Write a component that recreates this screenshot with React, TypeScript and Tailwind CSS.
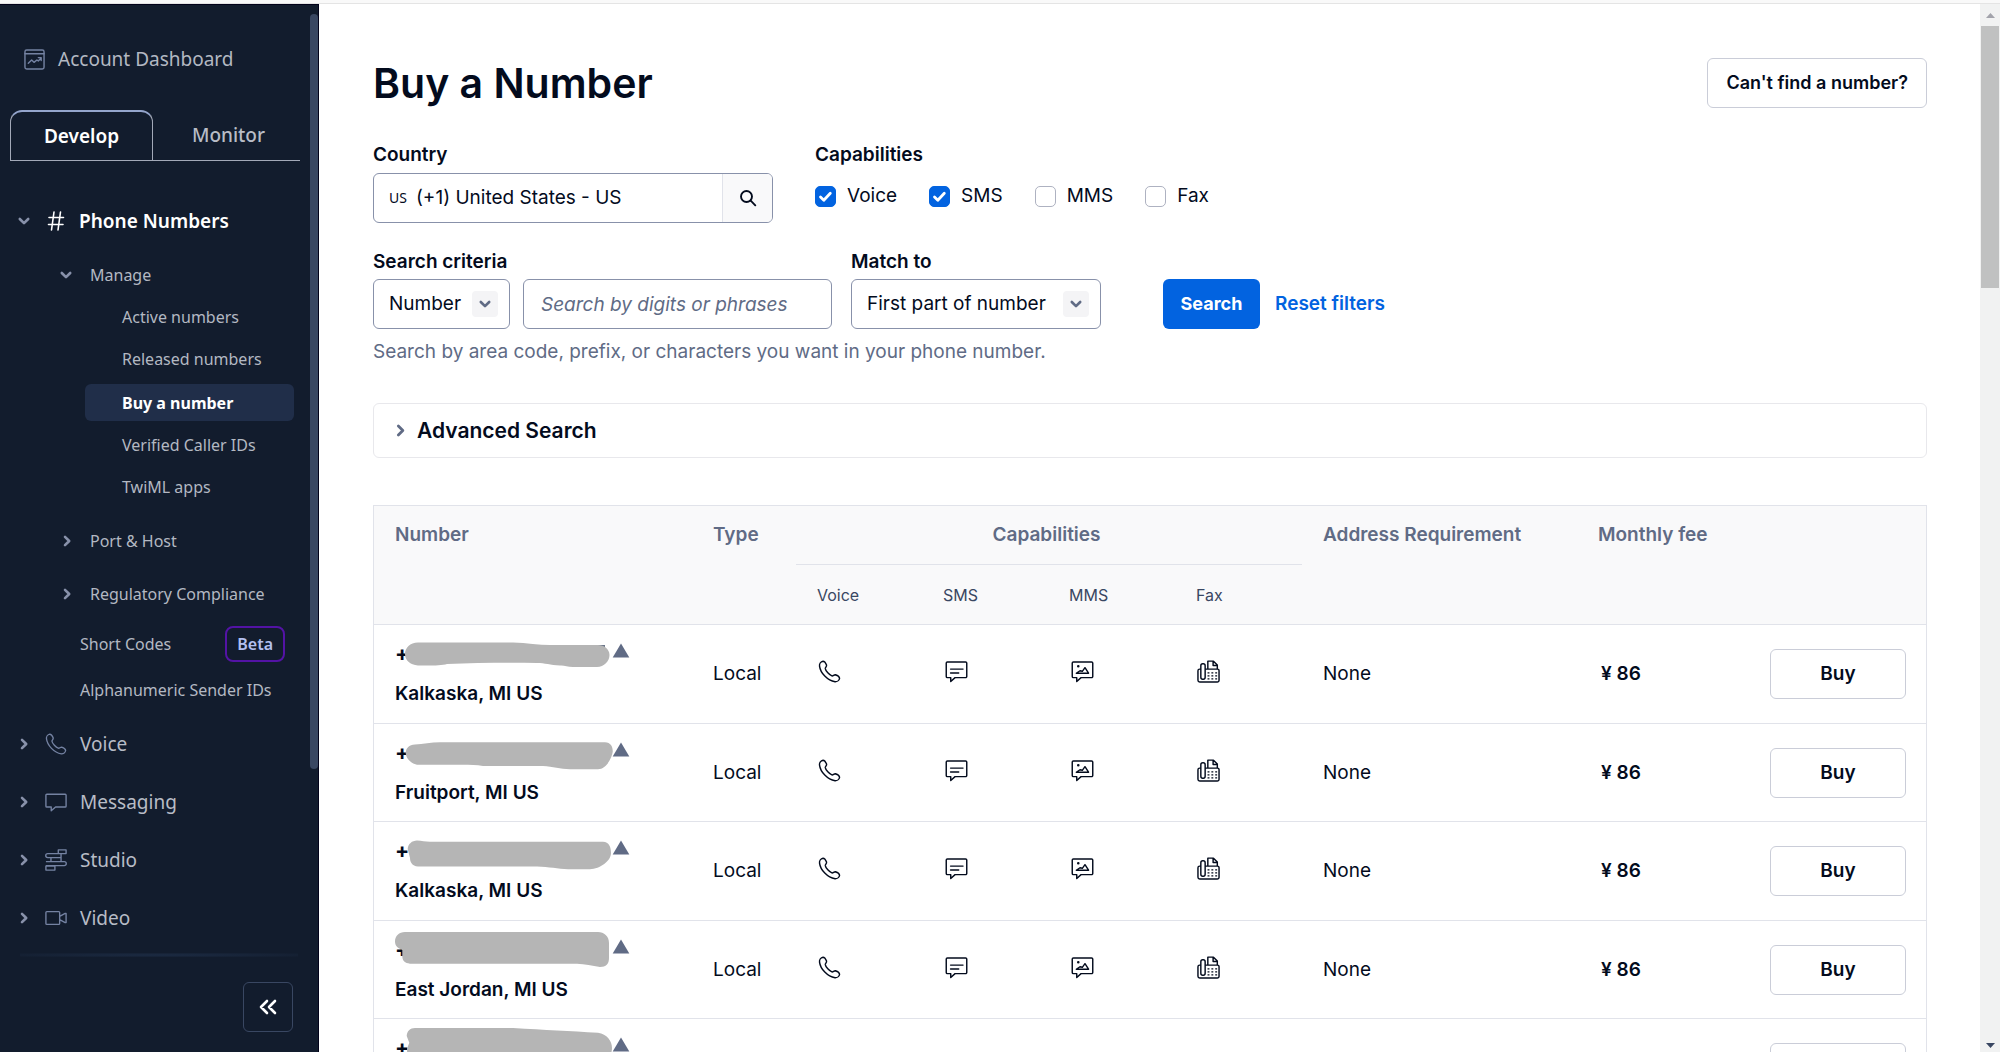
import type { ReactNode } from "react";

type IconProps = { className?: string };

function ChevronDown({ className }: IconProps) {
  return (
    <svg viewBox="0 0 14 14" className={className} fill="none" stroke="currentColor" strokeWidth="2.6" strokeLinecap="round" strokeLinejoin="round" aria-hidden="true">
      <path d="M2.8 5l4.2 4.2L11.2 5" />
    </svg>
  );
}

function ChevronRight({ className }: IconProps) {
  return (
    <svg viewBox="0 0 14 14" className={className} fill="none" stroke="currentColor" strokeWidth="2.6" strokeLinecap="round" strokeLinejoin="round" aria-hidden="true">
      <path d="M5 2.8L9.2 7 5 11.2" />
    </svg>
  );
}

function PhoneIcon({ className }: IconProps) {
  return (
    <svg viewBox="0 0 24 24" className={className} fill="none" stroke="currentColor" strokeWidth="1.5" strokeLinejoin="round" aria-hidden="true">
      <path d="M1.600 6.300C1.300 4 3 1.700 5.200 1.300c1.600-.1 2.800 1.800 3.700 4 .5 1.600-1.400 2.400-1.300 3.700.4 2.500 4.300 6.600 6.900 7.600 1.300.4 2.200-1.400 3.700-1.200 1.900.6 4.200 2.200 4.300 3.700-.3 2-2.500 3.700-4.700 3.600C9.900 21.500 2.500 13.500 1.600 6.300z" />
    </svg>
  );
}

function MessageIcon({ className }: IconProps) {
  return (
    <svg viewBox="0 0 24 24" className={className} fill="none" stroke="currentColor" strokeWidth="1.5" strokeLinejoin="round" aria-hidden="true">
      <path d="M2 3.500h20a1 1 0 0 1 1 1v12a1 1 0 0 1-1 1H11.500L6.800 21.500V17.500H2a1 1 0 0 1-1-1v-12a1 1 0 0 1 1-1z" />
    </svg>
  );
}

function StudioIcon({ className }: IconProps) {
  return (
    <svg viewBox="0 0 24 24" className={className} fill="none" stroke="currentColor" strokeWidth="1.5" strokeLinejoin="round" aria-hidden="true">
      <path d="M14.500 1h8.500v4h-8.500zM14.500 5H3a2.200 2.200 0 0 0 0 4.400h14.500V5M6.500 9.400h11v4.400h-11zM6.500 13.800H1M6.500 13.800H21a2.200 2.200 0 0 1 0 4.400H1M1 18.600h9.800V23H1z" />
    </svg>
  );
}

function VideoIcon({ className }: IconProps) {
  return (
    <svg viewBox="0 0 24 24" className={className} fill="none" stroke="currentColor" strokeWidth="1.5" strokeLinejoin="round" aria-hidden="true">
      <path d="M2 5h13a1 1 0 0 1 1 1v12a1 1 0 0 1-1 1H2a1 1 0 0 1-1-1V6a1 1 0 0 1 1-1zM16 10.300l6-3.300h1v10h-1l-6-3.300" />
    </svg>
  );
}

function DashboardIcon({ className }: IconProps) {
  return (
    <svg viewBox="0 0 22 22" className={className} fill="none" stroke="currentColor" strokeWidth="1.5" strokeLinejoin="round" strokeLinecap="round" aria-hidden="true">
      <rect x="1" y="1" width="20" height="20" rx="1.800" />
      <path d="M1 5h20M4.500 15l3.500-3.500 2.500 2.500 3-2.500 1.500 1 3-3M15 9h3v3" />
    </svg>
  );
}

function SmsIcon({ className }: IconProps) {
  return (
    <svg viewBox="0 0 24 24" className={className} fill="none" stroke="currentColor" strokeWidth="1.5" strokeLinejoin="round" strokeLinecap="round" aria-hidden="true">
      <path d="M2.500 2h19A1.200 1.200 0 0 1 22.700 3.200v14A1.200 1.200 0 0 1 21.500 18.400H10.500L6 22.500v-4.100H2.500a1.200 1.200 0 0 1-1.200-1.200v-14A1.200 1.200 0 0 1 2.500 2zM5.800 9.500h13M5.800 13.500h8.500" />
    </svg>
  );
}

function MmsIcon({ className }: IconProps) {
  return (
    <svg viewBox="0 0 24 24" className={className} fill="none" stroke="currentColor" strokeWidth="1.5" strokeLinejoin="round" strokeLinecap="round" aria-hidden="true">
      <path d="M2.500 2h19A1.200 1.200 0 0 1 22.700 3.200v14A1.200 1.200 0 0 1 21.500 18.400H10.500L6 22.500v-4.100H2.500a1.200 1.200 0 0 1-1.200-1.200v-14A1.200 1.200 0 0 1 2.500 2z" />
      <path d="M5.500 13.800h12.800L14.600 8l-2.800 3.800-2.400-.6z" />
      <circle cx="7.600" cy="6.600" r="0.600" fill="currentColor" />
    </svg>
  );
}

function FaxIcon({ className }: IconProps) {
  return (
    <svg viewBox="0 0 24 24" className={className} fill="none" stroke="currentColor" strokeWidth="1.5" strokeLinejoin="round" aria-hidden="true">
      <path d="M4 9.500H2.800A1.800 1.800 0 0 0 1 11.300v9.900A1.800 1.800 0 0 0 2.800 23h18.400a1.800 1.800 0 0 0 1.800-1.800V11.300a1.800 1.800 0 0 0-1.800-1.800H8.500" />
      <rect x="4" y="4" width="4.500" height="16" rx="2" />
      <path d="M11.300 9.500V1.200h5.900l4 4v4.300M16.800 1.500v4.200h4.200" />
      <path d="M11 13.400h10M11 16.600h10M11 19.800h10" strokeWidth="1.300" strokeDasharray="2 2" />
    </svg>
  );
}

function HashIcon({ className }: IconProps) {
  return (
    <svg viewBox="0 0 18 22" className={className} fill="none" stroke="currentColor" strokeWidth="1.600" strokeLinecap="round" aria-hidden="true">
      <path d="M7 2L4.500 20M13.500 2L11 20M2 7.500h14.500M1.500 14.500H16" />
    </svg>
  );
}

function TopLink({ label, icon }: { label: string; icon: ReactNode }) {
  return (
    <a href="#" className="flex h-[58px] items-center text-[19px] text-[#b8bcc6]">
      <ChevronRight className="ml-[17px] size-[14px] text-[#8891aa]" />
      <span className="ml-[14px] mr-[13px] text-[#7482a2]">{icon}</span>
      {label}
    </a>
  );
}

function SubLink({ label, active }: { label: string; active?: boolean }) {
  return (
    <li>
      <a
        href="#"
        aria-current={active ? "page" : undefined}
        className={
          active
            ? "mt-1 mr-[24px] mb-[3px] ml-[85px] flex h-[37px] items-center rounded-md bg-[#202e49] pl-[37px] font-bold text-white"
            : "flex h-[42px] items-center pl-[122px]"
        }
      >
        {label}
      </a>
    </li>
  );
}

function Sidebar() {
  return (
    <aside className="relative flex w-[319px] shrink-0 flex-col border-t border-r border-[#02021a] bg-[#121c2d] font-['Noto_Sans',sans-serif] text-[16px] text-[#b3b8c2]">
      <div aria-hidden="true" className="absolute top-[9px] right-0 h-[755px] w-2 rounded-full bg-[#394762]" />
      <a href="#" className="mt-[25px] flex h-[58px] items-center gap-[13px] pl-[24px] text-[19px]">
        <DashboardIcon className="size-[21px] text-[#7482a2]" />
        Account Dashboard
      </a>
      <div role="tablist" className="mt-[22px] mr-[18px] ml-[10px] flex h-[51px] text-[19px] font-medium">
        <button type="button" role="tab" aria-selected="true" className="w-[143px] rounded-t-xl border border-t-2 border-[#a3a9b8] border-t-[#94a5cc] font-semibold text-white">
          Develop
        </button>
        <button type="button" role="tab" aria-selected="false" className="flex-1 border-b border-[#a3a9b8] pl-1 text-[#b8bcc6]">
          Monitor
        </button>
      </div>
      <nav className="flex-1 pt-[32px]">
        <a href="#" className="flex h-[56px] items-center text-[19px] font-semibold text-white">
          <ChevronDown className="ml-[17px] size-[14px] text-[#8891aa]" />
          <HashIcon className="mr-[14px] ml-[16px] h-[22px] w-[18px]" />
          Phone Numbers
        </a>
        <a href="#" className="mt-[5px] flex h-[42px] items-center">
          <ChevronDown className="ml-[59px] mr-[17px] size-[14px] text-[#8891aa]" />
          Manage
        </a>
        <ul>
          <SubLink label="Active numbers" />
          <SubLink label="Released numbers" />
          <SubLink label="Buy a number" active />
          <SubLink label="Verified Caller IDs" />
          <SubLink label="TwiML apps" />
        </ul>
        <a href="#" className="mt-[6px] flex h-[53px] items-center">
          <ChevronRight className="ml-[60px] mr-[16px] size-[14px] text-[#8891aa]" />
          Port &amp; Host
        </a>
        <a href="#" className="flex h-[53px] items-center">
          <ChevronRight className="ml-[60px] mr-[16px] size-[14px] text-[#8891aa]" />
          Regulatory Compliance
        </a>
        <a href="#" className="flex h-[48px] items-center justify-between pr-[33px] pl-[80px]">
          Short Codes
          <span className="rounded-lg border-2 border-[#5313a5] px-[10px] py-[4px] font-semibold text-[#b3c0f0]">Beta</span>
        </a>
        <a href="#" className="mb-[3px] flex h-[44px] items-center pl-[80px]">Alphanumeric Sender IDs</a>
        <TopLink label="Voice" icon={<PhoneIcon className="size-[22px]" />} />
        <TopLink label="Messaging" icon={<MessageIcon className="size-[22px]" />} />
        <TopLink label="Studio" icon={<StudioIcon className="size-[22px]" />} />
        <TopLink label="Video" icon={<VideoIcon className="size-[22px]" />} />
      </nav>
      <div className="mx-5 h-[4px] bg-radial from-[#1c2b43] to-transparent" />
      <div className="flex pt-[25px] pr-[25px] pb-[20px]">
        <button type="button" aria-label="Collapse sidebar" className="ml-auto grid size-[50px] place-items-center rounded-md border border-[#394762] text-white">
          <svg viewBox="0 0 18 16" className="h-4 w-[18px]" fill="none" stroke="currentColor" strokeWidth="2.600" strokeLinecap="round" strokeLinejoin="round" aria-hidden="true">
            <path d="M8 2L2 8l6 6M16 2l-6 6 6 6" />
          </svg>
        </button>
      </div>
    </aside>
  );
}

function SelectField({ id, value, className }: { id: string; value: string; className: string }) {
  return (
    <div className={className}>
      <select id={id} defaultValue={value} className="h-[50px] w-full appearance-none rounded-md border border-[#8891aa] bg-white pl-[15px]">
        <option>{value}</option>
      </select>
      <span className="pointer-events-none absolute top-3 right-3 grid size-[26px] place-items-center rounded bg-[#f4f4f6] text-[#606b85]">
        <ChevronDown className="size-[14px]" />
      </span>
    </div>
  );
}

function CapabilityBox({ label, checked }: { label: string; checked?: boolean }) {
  return (
    <label className="flex items-center gap-[11px]">
      <span className="relative grid size-[21px]">
        <input
          type="checkbox"
          defaultChecked={checked}
          className="peer size-[21px] appearance-none rounded-[5px] border border-[#aeb2c1] bg-white checked:border-[#0263e0] checked:bg-[#0263e0]"
        />
        <svg viewBox="0 0 21 21" className="pointer-events-none absolute inset-0 hidden peer-checked:block" fill="none" stroke="white" strokeWidth="2.800" strokeLinecap="round" strokeLinejoin="round" aria-hidden="true">
          <path d="M5.500 11l3.300 3.200 6.500-7" />
        </svg>
      </span>
      {label}
    </label>
  );
}

type Row = { city: string; blob: string; stray?: string };

const rows: Row[] = [
  {
    city: "Kalkaska, MI US",
    blob: "M10 20C10 14 15 8.500 23 8.500H118C132 9 144 11 155 11H203C209 11 214.500 15 214.500 21S209 33 202 33H178C172 33 169 31 165 31.500C155 31 150 29 142 29C110 28.500 80 29 52 30C46 32 30 31.500 23 31.500C15 31 10 26 10 20z",
    stray: "M199 12h11",
  },
  {
    city: "Fruitport, MI US",
    blob: "M10.700 20C11 15 14 11.700 20 11.500C28 11.500 36 9.300 45 9.300H210C216 9.500 218 14 217.700 19C217 24 212 36 203 36.300H175C165 36 158 33.700 148 33H88C80 31.500 72 31.700 60 31.700H22C17 31 11 26 10.700 20z",
  },
  {
    city: "Kalkaska, MI US",
    blob: "M12.700 18C13 13 17 9.500 22 9.500C27 9.500 30 10.800 35 10.800H208C214 11 216 16 216 22C216 30 205 38 195 38.200H173C163 38 154 35.700 142 35.500H23C17 35 15 31 15 27z",
  },
  {
    city: "East Jordan, MI US",
    blob: "M0 11.400C0 6 4 2 10 2H203C209 2 214 6 214 13V28C214 34 211 37 205 37C197 36 190 33.700 182 33.700H15C10 33 7.300 31 7.300 26V20C3 18 0 16 0 11.400z",
  },
  {
    city: "Kalkaska, MI US",
    blob: "M11.700 8C12 3 15 0 20 0H118C150 2 175 3 203 4.800C212 6 217 13 217 20C217 30 208 36 200 36H24C16 35 11 30 12.300 20L14.300 14.800z",
  },
];

const headText = "font-semibold text-[#606b85]";
const borderCell = "border-b border-[#e1e3ea]";

function NumbersTable() {
  return (
    <table className="mt-[47px] w-full table-fixed border-separate border-spacing-0 border border-[#e1e3ea] text-left">
      <colgroup>
        <col className="w-[318px]" />
        <col className="w-[104px]" />
        <col className="w-[126px]" />
        <col className="w-[126px]" />
        <col className="w-[127px]" />
        <col className="w-[127px]" />
        <col className="w-[275px]" />
        <col className="w-[169px]" />
        <col className="w-[180px]" />
      </colgroup>
      <thead className="bg-[#f9f9fa]">
        <tr className="h-[59px]">
          <th scope="col" rowSpan={2} className={`${headText} ${borderCell} pt-[17px] pl-[21px] align-top`}>Number</th>
          <th scope="col" rowSpan={2} className={`${headText} ${borderCell} pt-[17px] pl-[21px] align-top`}>Type</th>
          <th scope="colgroup" colSpan={4} className={`${headText} ${borderCell} pr-[5px] text-center`}>Capabilities</th>
          <th scope="col" rowSpan={2} className={`${headText} ${borderCell} pt-[17px] pl-[21px] align-top`}>Address Requirement</th>
          <th scope="col" rowSpan={2} className={`${headText} ${borderCell} pt-[17px] pl-[21px] align-top`}>Monthly fee</th>
          <td rowSpan={2} className={borderCell} />
        </tr>
        <tr className="h-[60px] text-[16px]">
          {["Voice", "SMS", "MMS", "Fax"].map((name) => (
            <th key={name} scope="col" className={`${borderCell} pl-[21px] font-normal text-[#394762]`}>{name}</th>
          ))}
        </tr>
      </thead>
      <tbody>
        {rows.map((row, i) => (
          <tr key={i} className="h-[99px] even:h-[98px]">
            <td className={`${borderCell} pl-[21px] font-semibold`}>
              <div className="relative flex h-10 items-center text-[21px] font-bold">
                +
                <svg viewBox="0 0 240 40" className="absolute top-0 left-0 h-10 w-[240px]" aria-hidden="true">
                  {row.stray && <path d={row.stray} stroke="#394762" strokeWidth="1.500" />}
                  <path d={row.blob} fill="#b5b5b5" />
                  <path d="M226 9.500l8.300 14h-16.600z" fill="#606b85" />
                </svg>
              </div>
              <div className="flex h-10 items-center">{row.city}</div>
            </td>
            <td className={`${borderCell} pl-[21px]`}>Local</td>
            <td className={`${borderCell} pb-[5px] pl-[22px]`}><PhoneIcon className="size-[23px]" /></td>
            <td className={`${borderCell} pb-[5px] pl-[23px]`}><SmsIcon className="size-[23px]" /></td>
            <td className={`${borderCell} pb-[5px] pl-[23px]`}><MmsIcon className="size-[23px]" /></td>
            <td className={`${borderCell} pb-[5px] pl-[22px]`}><FaxIcon className="size-[23px]" /></td>
            <td className={`${borderCell} pl-[21px]`}>None</td>
            <td className={`${borderCell} pl-[24px] font-semibold`}>¥ 86</td>
            <td className={`${borderCell} px-[20px]`}>
              <button type="button" className="ml-auto block h-[50px] w-[136px] rounded-md border border-[#cacdd8] font-semibold">Buy</button>
            </td>
          </tr>
        ))}
      </tbody>
    </table>
  );
}

export default function App() {
  return (
    <div className="flex h-screen flex-col overflow-hidden bg-white font-[Inter,sans-serif] text-[19px] leading-[24px] text-[#030b1d]">
      <div className="h-1 shrink-0 border-b border-[#e4e4e4] bg-[#f9f9f9]" />
      <div className="flex min-h-0 flex-1">
        <Sidebar />
        <main className="min-w-0 flex-1 overflow-hidden pt-[54px] pr-[53px] pl-[54px]">
          <div className="flex items-center justify-between">
            <h1 className="text-[41px] leading-[50px] font-semibold">Buy a Number</h1>
            <button type="button" className="h-[50px] rounded-md border border-[#cacdd8] px-[18px] text-[18px] font-semibold">Can't find a number?</button>
          </div>

          <div className="mt-[35px] flex gap-[42px]">
            <div>
              <label htmlFor="country" className="block font-semibold">Country</label>
              <div className="mt-[6px] flex h-[50px] w-[400px] items-center overflow-hidden rounded-md border border-[#8891aa]">
                <span className="pl-[15px] font-['Noto_Sans',sans-serif] text-[14px]">US</span>
                <input id="country" defaultValue="(+1) United States - US" className="ml-[9px] min-w-0 flex-1" />
                <button type="button" aria-label="Search countries" className="grid h-full w-[50px] place-items-center border-l border-[#e1e3ea] bg-[#f9f9fa]">
                  <svg viewBox="0 0 18 18" className="size-[18px]" fill="none" stroke="currentColor" strokeWidth="1.900" strokeLinecap="round" aria-hidden="true">
                    <circle cx="7.500" cy="7.500" r="5.500" />
                    <path d="M11.700 11.700L16.300 16.300" />
                  </svg>
                </button>
              </div>
            </div>
            <fieldset>
              <legend className="font-semibold">Capabilities</legend>
              <div className="mt-[17px] flex gap-[32px]">
                <CapabilityBox label="Voice" checked />
                <CapabilityBox label="SMS" checked />
                <CapabilityBox label="MMS" />
                <CapabilityBox label="Fax" />
              </div>
            </fieldset>
          </div>

          <div className="mt-[27px] flex items-end">
            <div>
              <label htmlFor="criteria" className="block font-semibold">Search criteria</label>
              <div className="mt-[5px] flex gap-[13px]">
                <SelectField id="criteria" value="Number" className="relative w-[137px]" />
                <input
                  aria-label="Search by digits or phrases"
                  placeholder="Search by digits or phrases"
                  className="h-[50px] w-[309px] rounded-md border border-[#8891aa] px-[17px] placeholder:text-[#606b85] placeholder:italic"
                />
              </div>
            </div>
            <div className="ml-[19px]">
              <label htmlFor="match" className="block font-semibold">Match to</label>
              <SelectField id="match" value="First part of number" className="relative mt-[5px] w-[250px]" />
            </div>
            <button type="button" className="ml-[62px] h-[50px] w-[97px] rounded-md bg-[#0263e0] text-[18px] font-bold text-white">Search</button>
            <a href="#" className="ml-[15px] flex h-[50px] items-center font-semibold text-[#0263e0]">Reset filters</a>
          </div>
          <p className="mt-[11px] text-[#606b85]">Search by area code, prefix, or characters you want in your phone number.</p>

          <button type="button" aria-expanded="false" className="mt-[39px] flex h-[55px] w-full items-center gap-[9px] rounded-md border border-[#e8e8ec] pl-[19px] text-[21px] font-semibold">
            <ChevronRight className="size-[15px] text-[#606b85]" />
            Advanced Search
          </button>

          <NumbersTable />
        </main>
        <div aria-hidden="true" className="flex w-5 shrink-0 flex-col items-center bg-[#f1f2f2] pt-[9px] pb-[4px]">
          <svg viewBox="0 0 9 5" className="h-[5px] w-[9px]" fill="#a2a3ab"><path d="M4.500 0L9 5H0z" /></svg>
          <div className="mt-[8px] h-[262px] w-[18px] bg-[#c0c1c1]" />
          <svg viewBox="0 0 9 5" className="mt-auto h-[5px] w-[9px]" fill="#394762"><path d="M0 0h9L4.500 5z" /></svg>
        </div>
      </div>
    </div>
  );
}
